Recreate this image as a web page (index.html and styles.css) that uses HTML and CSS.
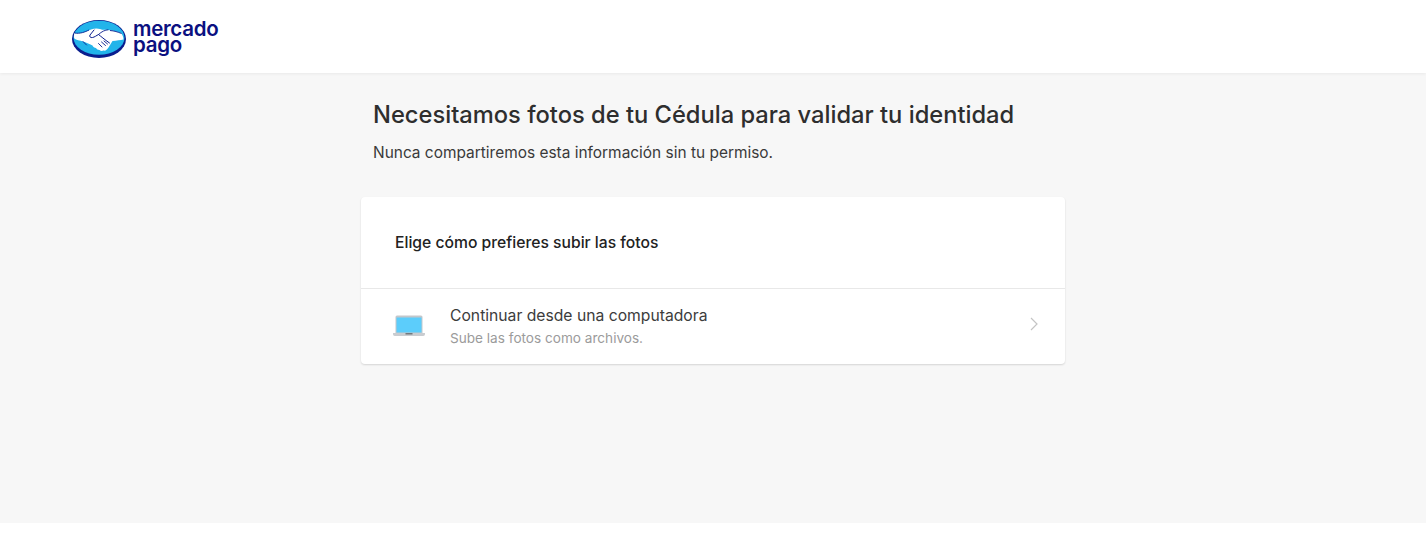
FILE: index.html
```html
<!DOCTYPE html>
<html lang="es">
<head>
<meta charset="utf-8">
<title>Mercado Pago</title>
<link rel="stylesheet" href="styles.css">
</head>
<body>
<header class="topbar">
  <div class="brand">
    <svg class="brand-mark" width="54" height="38" viewBox="0 0 54 38" aria-hidden="true">
      <ellipse cx="27" cy="19" rx="27" ry="19" fill="#0a1e8e"/>
      <ellipse cx="27" cy="17.800" rx="25.500" ry="17" fill="#22b4ea"/>
      <path d="M2.500 13C8 14 13 12 19 9.500c3-1 6-1.500 9-.5 2 .8 3.500 1 6 .8 5 .3 10 1.500 15 3.200 1.500 2 2.500 4 2.500 6.500-3 .5-7 1-11 1.500l-4 6.500c-1.500 2.500-3 3.500-5 3-1.500.7-3 .4-4-.5-1.500 0-3-.7-3.500-2-1.500 0-3-1-3.500-2.500C17 24 14 22 11 21.500 8 20.500 4 20 2.300 18.500 1.700 16.500 1.800 15 2.500 13z" fill="#fff"/>
      <path d="M2.500 13C8 14 13 12 17 10M38 10.500c4 .3 8 1.500 11.500 3" fill="none" stroke="#0a1e8e" stroke-width=".9"/>
      <path d="M22 10l-4 5c-1 1.500.5 3 2.500 2.500 2-.3 4-2 6-3 2 1.500 6 5 11 8.500" fill="none" stroke="#0a1e8e" stroke-width="1" stroke-linecap="round" stroke-linejoin="round"/>
      <path d="M36 9.800c-3 .2-6 1.500-9.500 4.700M11 21.500l3.500 3.500M30 27l-3.500-3.500M33.500 25.500l-4-3.500M35.500 24l-3.500-3" fill="none" stroke="#0a1e8e" stroke-width=".9" stroke-linecap="round"/>
    </svg>
    <div class="brand-name">
      <div class="brand-line">mercado</div>
      <div class="brand-line">pago</div>
    </div>
  </div>
</header>
<main class="page">
  <div class="content">
    <div class="intro">
      <h1 class="title">Necesitamos fotos de tu Cédula para validar tu identidad</h1>
      <p class="subtitle">Nunca compartiremos esta información sin tu permiso.</p>
    </div>
    <section class="card">
      <h2 class="card-head">Elige cómo prefieres subir las fotos</h2>
      <div class="option">
        <svg class="laptop" width="32" height="22" viewBox="0 0 32 22" aria-hidden="true">
          <path d="M2.500 2a1.500 1.500 0 0 1 1.500-1.500h24a1.500 1.500 0 0 1 1.500 1.500v16h-27z" fill="#c3c7cb"/>
          <rect x="3.500" y="2.500" width="25" height="15" fill="#5ccdfb"/>
          <path d="M0 18h32v1.200a1.800 1.800 0 0 1-1.800 1.800H1.800A1.800 1.800 0 0 1 0 19.200z" fill="#c9ccd0"/>
          <rect x="12.500" y="18" width="7" height="1.500" fill="#73787d"/>
        </svg>
        <div class="option-text">
          <div class="option-title">Continuar desde una computadora</div>
          <div class="option-desc">Sube las fotos como archivos.</div>
        </div>
        <svg class="chevron" width="8" height="14" viewBox="0 0 8 14" aria-hidden="true">
          <path d="M1 1l6 6-6 6" fill="none" stroke="#c4c4c4" stroke-width="1.200"/>
        </svg>
      </div>
    </section>
  </div>
</main>
</body>
</html>
```
FILE: styles.css
```css
* { box-sizing: border-box; }
html, body { margin: 0; padding: 0; background: #fff; }
body { font-family: "Inter", "Liberation Sans", sans-serif; height: 536px; overflow: hidden; }
.topbar {
  height: 73px;
  background: #fff;
  box-shadow: 0 1px 3px rgba(0,0,0,.06);
  position: relative;
  display: flex;
  align-items: center;
  padding: 9px 0 0 72px;
}
.brand { display: flex; align-items: center; gap: 7px; margin-top: -5px; }
.brand-mark { display: block; }
.brand-name {
  font-weight: 600;
  font-size: 20.500px;
  color: #0b1080;
  letter-spacing: -.3px;
  margin-top: -3px;
}
.brand-line { line-height: 16px; height: 16px; }
.page { height: 450px; background: #f7f7f7; }
.content { width: 704px; margin: 0 auto; padding-top: 26px; }
.intro { padding-left: 12px; }
.title {
  margin: 0;
  font-size: 23.700px;
  line-height: 32px;
  font-weight: 500;
  color: #2e2e2e;
}
.subtitle {
  margin: 12px 0 0;
  font-size: 15.450px;
  line-height: 20px;
  font-weight: 400;
  color: #3a3a3a;
}
.card {
  margin-top: 34px;
  background: #fff;
  border-radius: 4px;
  box-shadow: 0 1px 2px rgba(0,0,0,.14);
}
.card-head {
  margin: 0;
  height: 92px;
  padding-left: 34px;
  display: flex;
  align-items: center;
  font-size: 15.700px;
  font-weight: 500;
  color: #222;
  border-bottom: 1px solid #e8e8e8;
}
.option {
  height: 75px;
  display: flex;
  align-items: center;
  padding: 0 27px 0 32px;
}
.laptop { flex: none; margin-top: -2px; }
.option-text { flex: 1; margin-left: 25px; }
.option-title { font-size: 15.700px; line-height: 20px; color: #3c3c3c; }
.option-desc { margin-top: 3px; font-size: 13.600px; line-height: 18px; color: #9b9b9b; }
.chevron { flex: none; margin-top: -5px; }
```
